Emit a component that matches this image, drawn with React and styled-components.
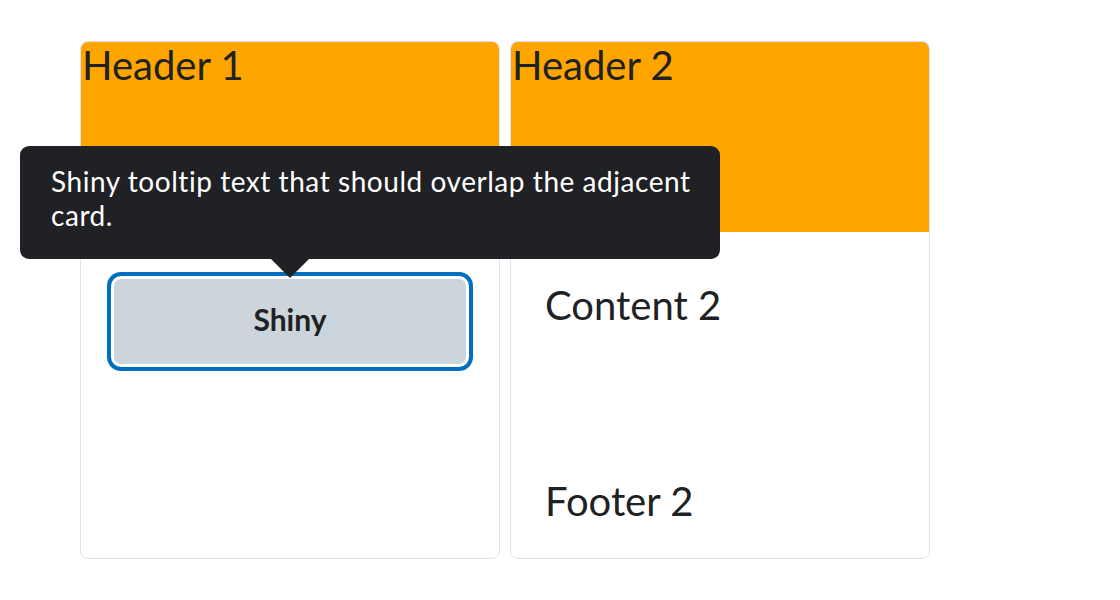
import React from "react";
import styled, { createGlobalStyle } from "styled-components";

const GlobalStyle = createGlobalStyle`
  html, body {
    margin: 0;
    padding: 0;
    background: #fff;
  }
  body {
    font-family: Lato, "Noto Sans", sans-serif;
    color: #202122;
    font-variant-ligatures: none;
  }
`;

const Page = styled.div`
  display: flex;
  gap: 10px;
  padding: 41px 0 0 80px;
`;

const Card = styled.div`
  position: relative;
  display: flex;
  flex-direction: column;
  width: 420px;
  height: 518px;
  box-sizing: border-box;
  border: 1px solid #dbe3ee;
  border-radius: 8px;
  background: #fff;
  z-index: ${(p) => (p.$raised ? 2 : 1)};
`;

const Header = styled.div`
  height: 190px;
  padding-left: 1px;
  background: #ffa500;
  border-radius: 7px 7px 0 0;
  font-size: 40px;
  line-height: 46px;
`;

const Content = styled.div`
  flex: 1;
  padding: ${(p) => p.$pad || "49px 34px 0"};
  font-size: 40px;
  line-height: 48px;
`;

const Footer = styled.div`
  padding: 0 34px 33px;
  font-size: 40px;
  line-height: 48px;
`;

const ButtonWrap = styled.div`
  position: relative;
  display: flex;
  justify-content: center;
`;

const Button = styled.button`
  width: 352px;
  height: 85px;
  padding: 0 0 5px;
  border: none;
  border-radius: 7px;
  background: #cdd5dc;
  font-family: Lato, "Noto Sans", sans-serif;
  font-weight: 700;
  font-size: 30px;
  color: #202122;
  box-shadow: 0 0 0 3px #fff, 0 0 0 7px #006fbf;
  cursor: pointer;
`;

const Tooltip = styled.div`
  position: absolute;
  left: -61px;
  bottom: 105px;
  width: 700px;
  box-sizing: border-box;
  padding: 18px 12px 27px 31px;
  background: #202124;
  border-radius: 9px;
  color: #fff;
  font-size: 28px;
  line-height: 34px;
  letter-spacing: 0.55px;

  &::after {
    content: "";
    position: absolute;
    left: 250px;
    bottom: -19px;
    border-left: 20px solid transparent;
    border-right: 20px solid transparent;
    border-top: 20px solid #202124;
  }
`;

export default function App() {
  return (
    <>
      <GlobalStyle />
      <Page>
        <Card $raised>
          <Header>Header 1</Header>
          <Content $pad="47px 0 0">
            <ButtonWrap>
              <Button>Shiny</Button>
              <Tooltip>
                Shiny tooltip text that should overlap the adjacent card.
              </Tooltip>
            </ButtonWrap>
          </Content>
        </Card>
        <Card>
          <Header>Header 2</Header>
          <Content>Content 2</Content>
          <Footer>Footer 2</Footer>
        </Card>
      </Page>
    </>
  );
}
